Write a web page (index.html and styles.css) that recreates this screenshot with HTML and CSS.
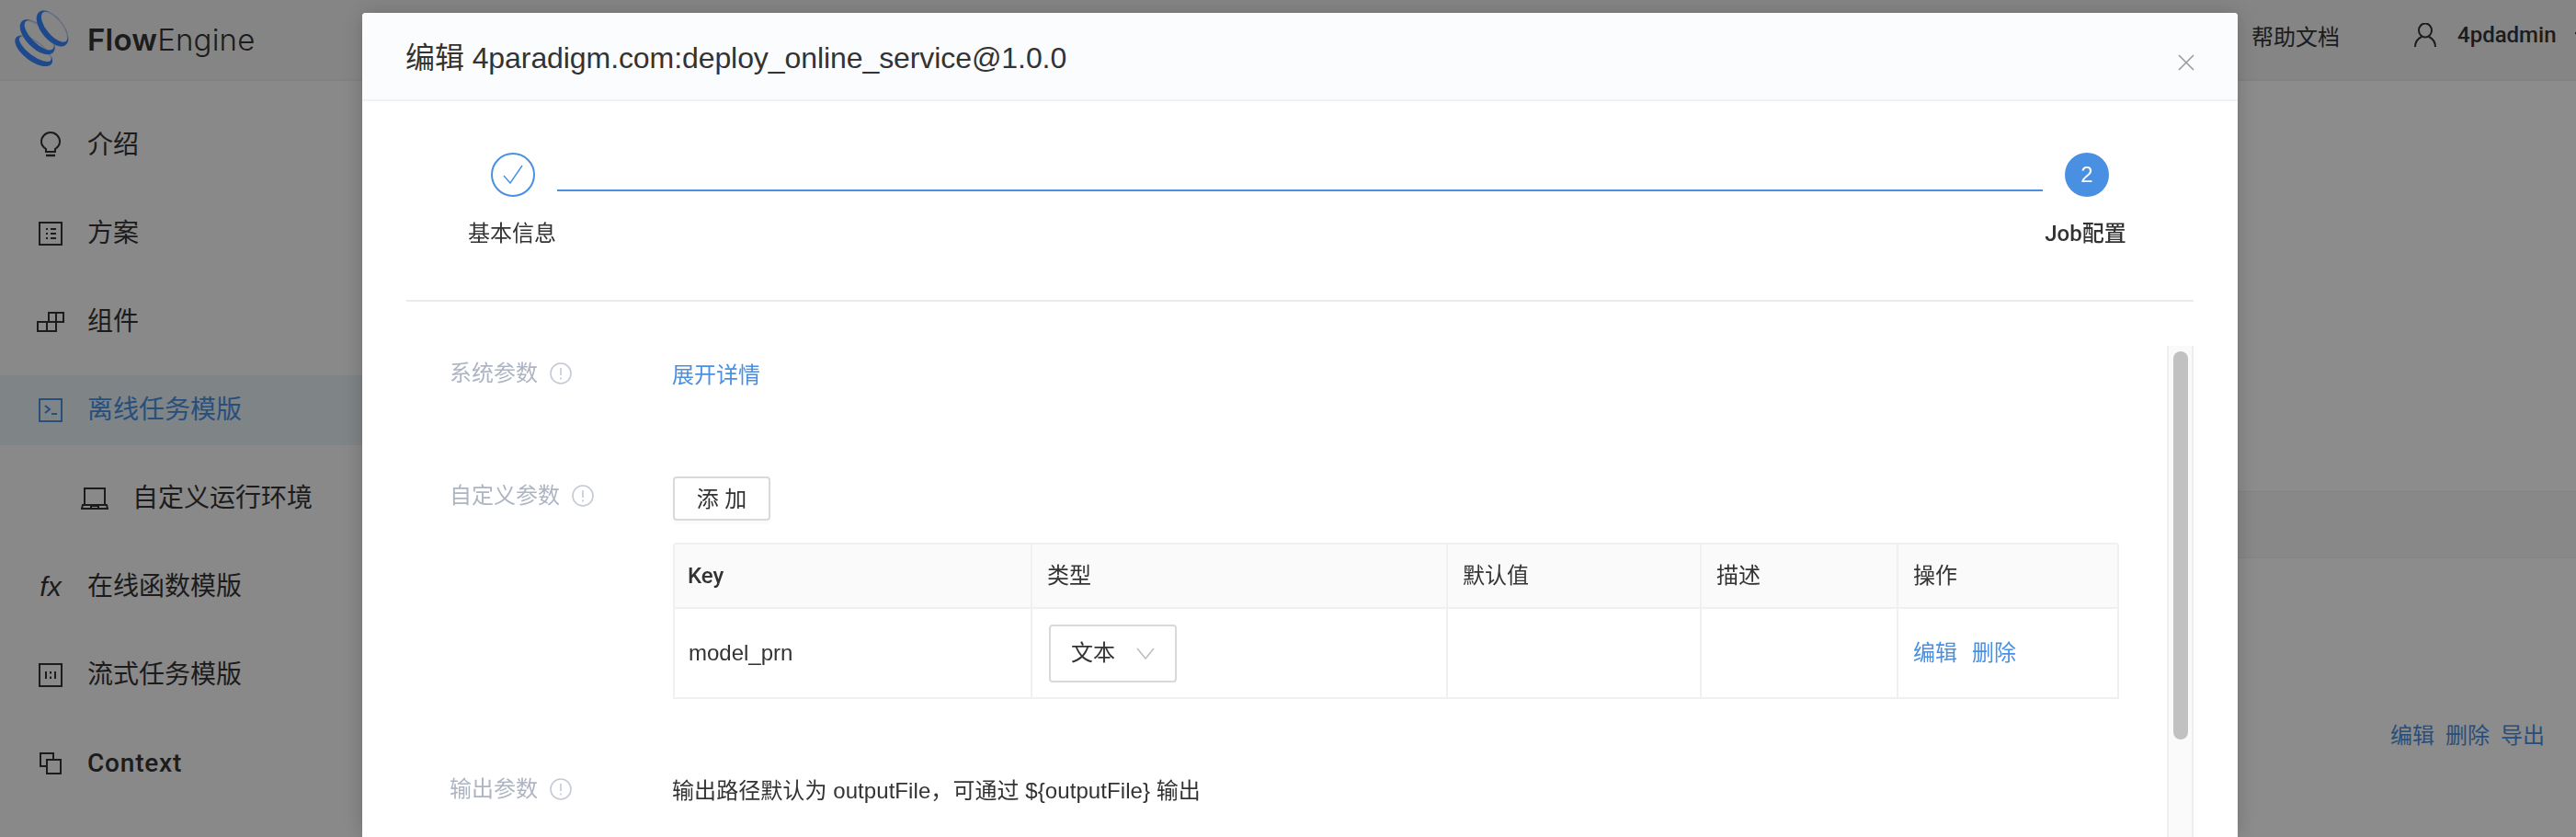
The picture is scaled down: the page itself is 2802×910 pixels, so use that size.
FILE: index.html
```html
<!DOCTYPE html>
<html>
<head>
  <title>FlowEngine</title>
  <link rel="stylesheet" href="styles.css">
</head>
<body>
  <header class="topbar">
    <div class="logo">
      <svg class="logo-mark" width="60" height="64" viewBox="0 0 60 64">
        <g transform="translate(20.7 44.3) rotate(36.5)">
          <ellipse rx="23" ry="10" fill="none" stroke="#c4cfe4" stroke-width="1.5"/>
          <path fill="#3886ff" fill-rule="evenodd" d="M-24 0 a24 11 0 1 0 48 0 a24 11 0 1 0 -48 0 Z M-21 -3 a21 8 0 1 0 42 0 a21 8 0 1 0 -42 0 Z"/>
        </g>
        <g transform="translate(24.7 29.3) rotate(45)">
          <ellipse rx="23" ry="11" fill="none" stroke="#c4cfe4" stroke-width="1.5"/>
          <path fill="#3886ff" fill-rule="evenodd" d="M-24 0 a24 12 0 1 0 48 0 a24 12 0 1 0 -48 0 Z M-21 -3 a21 9 0 1 0 42 0 a21 9 0 1 0 -42 0 Z"/>
        </g>
        <g transform="translate(41 20) rotate(51)">
          <ellipse rx="22.5" ry="11.5" fill="none" stroke="#c4cfe4" stroke-width="1.5"/>
          <path fill="#3886ff" fill-rule="evenodd" d="M-23 0 a23 12 0 1 0 46 0 a23 12 0 1 0 -46 0 Z M-20 -3 a20 9 0 1 0 40 0 a20 9 0 1 0 -40 0 Z"/>
        </g>
      </svg>
      <span class="logo-text"><b>Flow</b>Engine</span>
    </div>
    <div class="top-links">
      <span class="help-link">帮助文档</span>
      <svg class="user-icon" width="26" height="26" viewBox="0 0 26 26" fill="none" stroke="#333" stroke-width="2">
        <ellipse cx="13" cy="8" rx="7" ry="7.5"/>
        <path d="M2 26 C2 20 5 17 9 15 M24 26 C24 20 21 17 17 15"/>
      </svg>
      <span class="user-name">4pdadmin</span>
      <svg class="user-caret" width="1" height="6" viewBox="0 0 1 6" fill="none" stroke="#333" stroke-width="1.6">
        <path d="M0 0 L1 2"/>
      </svg>
    </div>
  </header>

  <div class="layout">
    <nav class="sidebar">
      <div class="nav-item">
        <span class="nav-icon">
          <svg width="28" height="30" viewBox="0 0 28 30" fill="none" stroke="#333" stroke-width="2">
            <path d="M9 22 V19 C6 17 4 14 4 11 A10 10 0 0 1 24 11 C24 14 22 17 19 19 V22 Z"/>
            <path d="M9 26 H19" stroke-width="2.4"/>
          </svg>
        </span>
        <span>介绍</span>
      </div>
      <div class="nav-item">
        <span class="nav-icon">
          <svg width="28" height="28" viewBox="0 0 28 28" fill="none" stroke="#333" stroke-width="2">
            <rect x="2" y="2" width="24" height="24"/>
            <path d="M9 9 H11 M14 9 H20 M9 14 H11 M14 14 H20 M9 19 H11 M14 19 H20"/>
          </svg>
        </span>
        <span>方案</span>
      </div>
      <div class="nav-item">
        <span class="nav-icon">
          <svg width="30" height="24" viewBox="0 0 30 24" fill="none" stroke="#333" stroke-width="2">
            <path d="M1 12 H21 V22 H1 Z M11 12 V22"/>
            <path d="M13 12 V2 H29 V12 H21 M21 2 V12"/>
          </svg>
        </span>
        <span>组件</span>
      </div>
      <div class="nav-item is-active">
        <span class="nav-icon">
          <svg width="28" height="28" viewBox="0 0 28 28" fill="none" stroke="#4a90e2" stroke-width="2">
            <rect x="2" y="2" width="24" height="24"/>
            <path d="M8 9 L13 13 L8 17 M15 18 H21"/>
          </svg>
        </span>
        <span>离线任务模版</span>
      </div>
      <div class="nav-item nav-sub">
        <span class="nav-icon">
          <svg width="30" height="26" viewBox="0 0 30 26" fill="none" stroke="#333" stroke-width="2">
            <path d="M4 20 V2 H26 V20"/>
            <path d="M1 24 L2 20 H28 L29 24 Z M11 24 V21 H19 V24"/>
          </svg>
        </span>
        <span>自定义运行环境</span>
      </div>
      <div class="nav-item">
        <span class="nav-icon nav-fx">fx</span>
        <span>在线函数模版</span>
      </div>
      <div class="nav-item">
        <span class="nav-icon">
          <svg width="28" height="28" viewBox="0 0 28 28" fill="none" stroke="#333" stroke-width="2">
            <rect x="2" y="2" width="24" height="24"/>
            <path d="M9 10 V18 M19 10 V18 M14 10 V12.5 M14 15.5 V18"/>
          </svg>
        </span>
        <span>流式任务模版</span>
      </div>
      <div class="nav-item nav-latin">
        <span class="nav-icon">
          <svg width="26" height="26" viewBox="0 0 26 26" fill="none" stroke="#333" stroke-width="2">
            <path d="M16 9 V2 H2 V16 H9"/>
            <rect x="9" y="9" width="15" height="15"/>
          </svg>
        </span>
        <span>Context</span>
      </div>
    </nav>

    <main class="content">
      <div class="list-head"></div>
      <div class="list-row">
        <a>编辑</a>
        <a>删除</a>
        <a>导出</a>
      </div>
    </main>
  </div>

  <div class="mask"></div>

  <div class="modal">
    <div class="modal-header">
      <span class="modal-title">编辑 4paradigm.com:deploy_online_service@1.0.0</span>
      <svg class="modal-close" width="18" height="18" viewBox="0 0 18 18" fill="none" stroke="#999" stroke-width="1.6">
        <path d="M1 1 L17 17 M17 1 L1 17"/>
      </svg>
    </div>

    <div class="modal-body">
      <div class="steps">
        <div class="step step-first">
          <span class="step-circle step-done">
            <svg width="26" height="26" viewBox="0 0 26 26" fill="none" stroke="#4a90e2" stroke-width="1.4">
              <path d="M3 14 L10 22 L23 3"/>
            </svg>
          </span>
          <span class="step-label">基本信息</span>
        </div>
        <div class="step-line"></div>
        <div class="step step-last">
          <span class="step-circle step-current">2</span>
          <span class="step-label step-label-current">Job配置</span>
        </div>
      </div>

      <div class="form-area">
        <div class="form">
          <div class="form-row row-system">
            <div class="form-label">
              系统参数
              <svg class="info-icon" width="24" height="24" viewBox="0 0 24 24" fill="none" stroke="#c3c9d5" stroke-width="1.6">
                <circle cx="12" cy="12" r="11"/>
                <path d="M12 6 V14 M12 16.5 V18.5"/>
              </svg>
            </div>
            <a class="link">展开详情</a>
          </div>

          <div class="form-row row-custom">
            <div class="form-label label-tall">
              自定义参数
              <svg class="info-icon" width="24" height="24" viewBox="0 0 24 24" fill="none" stroke="#c3c9d5" stroke-width="1.6">
                <circle cx="12" cy="12" r="11"/>
                <path d="M12 6 V14 M12 16.5 V18.5"/>
              </svg>
            </div>
            <div class="form-field">
              <button class="add-button">添 加</button>
              <table class="param-table">
                <thead>
                  <tr>
                    <th class="col-key">Key</th>
                    <th class="col-type">类型</th>
                    <th class="col-default">默认值</th>
                    <th class="col-desc">描述</th>
                    <th>操作</th>
                  </tr>
                </thead>
                <tbody>
                  <tr>
                    <td class="cell-name">model_prn</td>
                    <td>
                      <div class="select">
                        <span>文本</span>
                        <svg width="20" height="13" viewBox="0 0 20 13" fill="none" stroke="#bfbfbf" stroke-width="1.6">
                          <path d="M1 1 L10 12 L19 1"/>
                        </svg>
                      </div>
                    </td>
                    <td></td>
                    <td></td>
                    <td><a class="link">编辑</a><a class="link link-next">删除</a></td>
                  </tr>
                </tbody>
              </table>
            </div>
          </div>

          <div class="form-row">
            <div class="form-label">
              输出参数
              <svg class="info-icon" width="24" height="24" viewBox="0 0 24 24" fill="none" stroke="#c3c9d5" stroke-width="1.6">
                <circle cx="12" cy="12" r="11"/>
                <path d="M12 6 V14 M12 16.5 V18.5"/>
              </svg>
            </div>
            <span class="form-text">输出路径默认为 outputFile，可通过 ${outputFile} 输出</span>
          </div>
        </div>

        <div class="scroll-track">
          <div class="scroll-thumb"></div>
        </div>
      </div>
    </div>
  </div>
</body>
</html>
```

FILE: styles.css
```css
* {
  box-sizing: border-box;
}

html, body {
  height: 100%;
}

body {
  margin: 0;
  overflow: hidden;
  background-color: #fff;
  color: #333;
  font-family: "Liberation Sans", "Noto Sans CJK SC", sans-serif;
  font-size: 24px;
}

/* page under the mask */
.topbar {
  display: flex;
  justify-content: space-between;
  align-items: center;
  height: 88px;
  padding-left: 16px;
  background-color: #f3f3f3;
  border-bottom: 2px solid #ececec;
}

.logo {
  display: flex;
  align-items: center;
}

.logo-text {
  margin-left: 19px;
  font-family: Inter, sans-serif;
  font-size: 33px;
  font-weight: 300;
  letter-spacing: 0.2px;
}

.logo-text b {
  font-weight: 600;
}

.top-links {
  display: flex;
  align-items: center;
  padding-bottom: 10px;
}

.help-link {
  margin-right: 80px;
}

.user-icon {
  margin-right: 22px;
}

.user-name {
  width: 128px;
  font-family: Roboto, sans-serif;
  font-weight: 500;
}

.layout {
  display: flex;
}

.sidebar {
  flex: none;
  width: 400px;
  height: 822px;
  padding-top: 32px;
  background-color: #f9f9f9;
}

.nav-item {
  display: flex;
  align-items: center;
  height: 76px;
  margin-bottom: 20px;
  padding-left: 40px;
  font-size: 28px;
  line-height: 40px;
}

.nav-icon {
  display: flex;
  justify-content: center;
  flex: none;
  width: 30px;
  margin-right: 25px;
}

.nav-sub {
  padding-left: 88px;
}

.nav-sub .nav-icon {
  margin-right: 26px;
}

.nav-fx {
  font-style: italic;
  font-size: 30px;
}

.nav-latin {
  font-family: Roboto, sans-serif;
  font-weight: 500;
  letter-spacing: 0.8px;
}

.is-active {
  background-color: #e7f0f6;
  color: #4a90e2;
}

.content {
  flex: 1;
  padding-top: 446px;
}

.list-head {
  height: 73px;
  background-color: #f7f7f7;
  border-top: 1px solid #f0f0f0;
  border-bottom: 1px solid #f0f0f0;
}

.list-row {
  display: flex;
  justify-content: flex-end;
  gap: 12px;
  padding: 175px 34px 0 0;
  color: #4a90e2;
  line-height: 36px;
}

/* overlay */
.mask {
  position: fixed;
  top: 0;
  right: 0;
  bottom: 0;
  left: 0;
  background-color: rgba(0, 0, 0, 0.45);
}

.modal {
  position: fixed;
  top: 14px;
  bottom: 0;
  left: 394px;
  width: 2040px;
  overflow: hidden;
  background-color: #fff;
  border-radius: 4px 4px 0 0;
  box-shadow: 0 0 24px rgba(0, 0, 0, 0.2);
}

.modal-header {
  display: flex;
  justify-content: space-between;
  height: 96px;
  padding: 0 47px 0 47px;
  background-color: #fbfcfd;
  border-bottom: 2px solid #f1f1f1;
}

.modal-title {
  font-size: 32px;
  line-height: 98px;
  letter-spacing: -0.08px;
}

.modal-close {
  margin-top: 45px;
}

.modal-body {
  padding: 0 48px;
}

.steps {
  display: flex;
  padding: 56px 73px 56px 67px;
  border-bottom: 2px solid #e8eaed;
}

.step {
  display: flex;
  flex-direction: column;
  align-items: center;
  flex: none;
}

.step-first {
  width: 96px;
}

.step-last {
  width: 89px;
}

.step-circle {
  display: flex;
  justify-content: center;
  align-items: center;
  width: 48px;
  height: 48px;
  border-radius: 50%;
  margin-left: 3px;
}

.step-done {
  margin-left: 1px;
  border: 2px solid #4a90e2;
}

.step-current {
  background-color: #4a90e2;
  color: #fff;
}

.step-label {
  margin-top: 24px;
  line-height: 32px;
  white-space: nowrap;
}

.step-label-current {
  font-family: Roboto, "Noto Sans CJK SC", sans-serif;
  font-weight: 500;
}

.step-line {
  flex: 1;
  height: 2px;
  margin: 40px 2px 0 1px;
  background-color: #4a90e2;
}

.form-area {
  display: flex;
  margin-top: 48px;
}

.form {
  flex: 1;
  padding: 16px 52px 0 47px;
}

.form-row {
  display: flex;
  line-height: 32px;
}

.row-system {
  margin-bottom: 94px;
}

.row-custom {
  margin-bottom: 84px;
}

.form-label {
  display: flex;
  align-items: flex-start;
  flex: none;
  width: 242px;
  margin-top: -2px;
  color: #adb4c2;
}

.label-tall {
  margin-top: 0;
  line-height: 42px;
}

.info-icon {
  margin: 4px 0 0 13px;
}

.label-tall .info-icon {
  margin-top: 9px;
}

.link {
  color: #4a90e2;
}

.link-next {
  margin-left: 16px;
}

.form-text {
  letter-spacing: 0.07px;
}

.form-field {
  flex: 1;
  margin-left: 1px;
}

.add-button {
  display: block;
  width: 106px;
  height: 48px;
  margin-bottom: 24px;
  padding: 0 0 3px;
  background-color: #fff;
  border: 2px solid #d9d9d9;
  border-radius: 4px;
  box-shadow: 0 4px 0 rgba(0, 0, 0, 0.015);
  color: #333;
  font-family: inherit;
  font-size: 24px;
}

.param-table {
  width: 100%;
  table-layout: fixed;
  border-collapse: separate;
  border-spacing: 0;
  border-top: 2px solid #f0f0f0;
  border-left: 2px solid #f0f0f0;
  border-radius: 4px 4px 0 0;
}

.param-table th,
.param-table td {
  padding: 0 16px;
  border-right: 2px solid #f0f0f0;
  border-bottom: 2px solid #f0f0f0;
  text-align: left;
}

.param-table th {
  height: 70px;
  background-color: #fafafa;
  font-weight: normal;
}

.param-table td {
  height: 98px;
}

.param-table .col-key {
  width: 389px;
  padding-left: 14px;
  font-family: Roboto, sans-serif;
  font-weight: 500;
}

.param-table .cell-name {
  padding-left: 15px;
}

.col-type {
  width: 452px;
}

.col-default {
  width: 276px;
}

.col-desc {
  width: 214px;
}

.select {
  display: flex;
  justify-content: space-between;
  align-items: center;
  width: 139px;
  height: 63px;
  margin-left: 2px;
  padding: 0 22px;
  border: 2px solid #d9d9d9;
  border-radius: 4px;
}

.scroll-track {
  flex: none;
  width: 29px;
  height: 600px;
  padding: 6px 0 0 5px;
  background-color: #fafafa;
  border-right: 2px solid #eee;
  border-left: 2px solid #eee;
}

.scroll-thumb {
  width: 16px;
  height: 422px;
  background-color: #c1c1c1;
  border-radius: 8px;
}
```
